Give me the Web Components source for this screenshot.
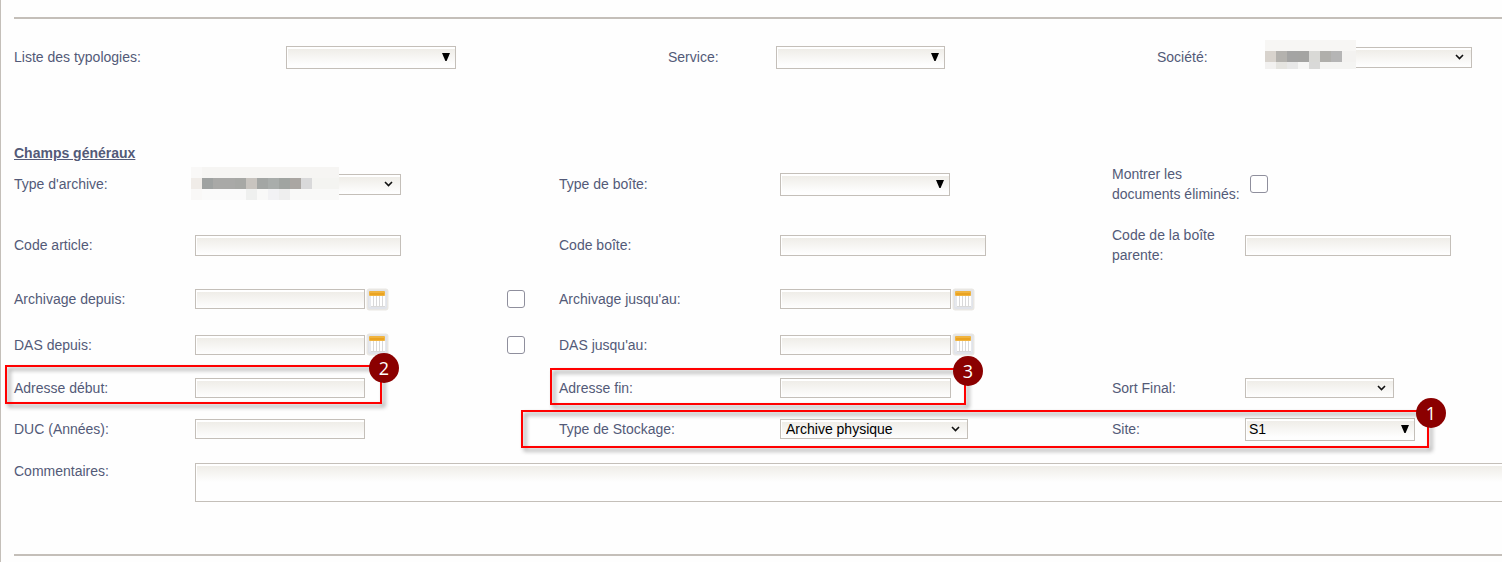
<!DOCTYPE html>
<html lang="fr">
<head>
<meta charset="utf-8">
<title>Recherche d'archives</title>
<style>
  html, body { margin: 0; background: #fefefe; }
  body { overflow-x: hidden; font: 14px/20px "Liberation Sans", Arial, sans-serif; color: #535a78; }
</style>
</head>
<body>
<search-panel>
  <form-row slot="filters" layout="filters">
    <form-field label="Liste des typologies:" type="combo" style="--c:1;--w:170px"></form-field>
    <form-field label="Service:" type="combo" style="--c:3;--w:169px"></form-field>
    <form-field label="Société:" type="select" style="--c:5;--w:207px"><pixel-mask kind="company"></pixel-mask></form-field>
  </form-row>

  <form-row style="--h:42px;--after:9px">
    <form-field label="Type d'archive:" type="select" style="--c:1;--w:206px"><pixel-mask kind="archive"></pixel-mask></form-field>
    <form-field label="Type de boîte:" type="combo" style="--c:4;--w:170px"></form-field>
    <form-field label="Montrer les documents éliminés:" type="check" style="--c:6;--indent:5px"></form-field>
  </form-row>
  <form-row style="--h:62px">
    <form-field label="Code article:" type="text" style="--c:1;--w:206px"></form-field>
    <form-field label="Code boîte:" type="text" style="--c:4;--w:206px"></form-field>
    <form-field label="Code de la boîte parente:" type="text" style="--c:6;--w:206px"></form-field>
  </form-row>
  <form-row style="--h:46px;--field:20px">
    <form-field label="Archivage depuis:" type="date" style="--c:1;--w:170px"></form-field>
    <form-field name="Activer la période d'archivage" type="check" style="--c:2"></form-field>
    <form-field label="Archivage jusqu'au:" type="date" style="--c:4;--w:171px"></form-field>
  </form-row>
  <form-row style="--h:45px;--field:20px">
    <form-field label="DAS depuis:" type="date" style="--c:1;--w:170px"></form-field>
    <form-field name="Activer la période DAS" type="check" style="--c:2"></form-field>
    <form-field label="DAS jusqu'au:" type="date" style="--c:4;--w:171px"></form-field>
  </form-row>
  <form-row style="--h:42px;--field:20px">
    <form-field label="Adresse début:" type="text" style="--c:1;--w:170px"></form-field>
    <form-field label="Adresse fin:" type="text" style="--c:4;--w:171px"></form-field>
    <form-field label="Sort Final:" type="select" style="--c:6;--w:149px"></form-field>
    <call-out style="grid-column:1/3;inset:-2px 125px 5px -9px">2</call-out>
    <call-out style="grid-column:4/6;inset:1px 146px 4px -9px">3</call-out>
  </form-row>
  <form-row style="--h:40px;--field:20px">
    <form-field label="DUC (Années):" type="text" style="--c:1;--w:170px"></form-field>
    <form-field label="Type de Stockage:" type="select" value="Archive physique" style="--c:4;--w:188px"></form-field>
    <form-field label="Site:" type="combo" value="S1" style="--c:6;--w:170px"></form-field>
    <call-out style="grid-column:4/8;inset:1px 73px 1px -38px">1</call-out>
  </form-row>
  <form-row layout="wide" style="--h:67px">
    <form-field label="Commentaires:" type="area" style="--c:1"></form-field>
  </form-row>
</search-panel>

<script>
class SearchPanel extends HTMLElement {
  constructor() {
    super();
    this.attachShadow({ mode: 'open' }).innerHTML = `
      <style>
        :host { display: block; box-sizing: border-box; min-height: 100vh; padding: 17px 0 6px 13px; border-left: 1px solid #c4bfb9; }
        hr { height: 2px; margin: 0; border: 0; background: #c4bfb9; }
        h2 { margin: 48px 0 0; font-size: 14px; line-height: 20px; text-decoration: underline; }
        .end { margin-top: 38px; }
      </style>
      <hr>
      <slot name="filters"></slot>
      <h2>Champs généraux</h2>
      <slot></slot>
      <hr class="end">`;
  }
}

class FormRow extends HTMLElement {
  constructor() {
    super();
    this.attachShadow({ mode: 'open' }).innerHTML = `
      <style>
        :host { display: grid; position: relative; align-items: center; min-height: var(--h, 76px); margin-bottom: var(--after, 0);
          grid-template-columns: minmax(0,181fr) minmax(0,312fr) minmax(0,52fr) minmax(0,221fr) minmax(0,332fr) minmax(0,133fr) minmax(0,257fr); }
        :host([layout="filters"]) { grid-template-columns: minmax(0,272fr) minmax(0,382fr) minmax(0,108fr) minmax(0,381fr) minmax(0,108fr) minmax(0,237fr); }
        :host([layout="wide"]) { grid-template-columns: minmax(0,181fr) minmax(0,1307fr); }
      </style>
      <slot></slot>`;
  }
}

const CHEVRON = '<svg class="arrow" width="9" height="6" viewBox="0 0 9 6" aria-hidden="true"><path d="M1 1 4.5 4.5 8 1" fill="none" stroke="#111" stroke-width="1.6"/></svg>';
const TRIANGLE = '<svg class="arrow" width="8" height="8" viewBox="0 0 8 8" aria-hidden="true"><path d="M0 0h8L4.6 8H3.4z" fill="#000"/></svg>';
const CALENDAR = `<svg width="23" height="23" viewBox="0 0 23 23" aria-hidden="true">
  <rect x=".5" y=".5" width="22" height="22" rx="3" fill="#e9e7e3"/>
  <rect x="2" y="2" width="19" height="19" rx="2" fill="#e0e3ea"/>
  <path d="M3 8h17v11H3z" fill="#e6e8ec"/>
  <path d="M5 8h2v10H5zM8 8h2v10H8zM11 8h2v10h-2zM14 8h2v10h-2zM17 8h2v10h-2z" fill="#fff"/>
  <path d="M7 8h1v10H7zM10 8h1v10h-1zM13 8h1v10h-1zM16 8h1v10h-1z" fill="#d9d9da"/>
  <path d="M5 18h14v1H5z" fill="#d9d9d9"/>
  <rect x="3" y="3" width="16" height="5" rx="1" fill="#f0b440"/>
  <path d="M4 5h14v2H4z" fill="#eaa322"/>
</svg>`;

class FormField extends HTMLElement {
  connectedCallback() {
    if (this.shadowRoot) return;
    const type = this.getAttribute('type');
    const label = this.getAttribute('label');
    const value = this.getAttribute('value') || '';
    const name = label ? '' : `aria-label="${this.getAttribute('name')}"`;
    const select = `<select id="c"><option>${value}</option></select>`;
    const control = {
      text: '<input id="c" type="text">',
      date: `<input id="c" type="text"><button type="button" aria-label="Ouvrir le calendrier">${CALENDAR}</button>`,
      check: `<input id="c" type="checkbox" ${name}>`,
      area: '<textarea id="c"></textarea>',
      select: select + CHEVRON,
      combo: select + TRIANGLE
    }[type];
    this.attachShadow({ mode: 'open' }).innerHTML = `
      <style>
        :host { display: contents; }
        label { grid-column: var(--c); grid-row: 1; }
        .control { grid-column: calc(var(--c) + 1); grid-row: 1; display: flex; align-items: center; position: relative; width: max-content; margin-left: var(--indent, 0); }
        input, select, textarea { box-sizing: border-box; margin: 0; font: inherit; color: #000; border: 1px solid #c4bfb9; border-radius: 0;
          background: #fff linear-gradient(#efede8, #fefefe 16px) 1px 2px / 100% 100% no-repeat; }
        input[type="text"] { width: var(--w); height: var(--field, 21px); padding: 0 4px; }
        select { appearance: none; width: var(--w); height: var(--field, 21px); padding: 0 20px 0 5px; line-height: 18px; }
        .combo select { height: 23px; padding-left: 3px; }
        .arrow { position: absolute; right: 8px; pointer-events: none; }
        .combo .arrow { right: 6px; }
        input[type="checkbox"] { appearance: none; width: 18px; height: 18px; border: 1px solid #8f8f9d; border-radius: 3px; background: #fff; }
        button { display: block; margin: 0 0 0 1px; padding: 0; border: 0; background: none; height: 23px; }
        .area { width: auto; align-self: start; margin-right: -4px; }
        textarea { width: 100%; height: 39px; resize: none; margin-top: 14px; }
        .area-label { align-self: start; margin-top: 12px; }
      </style>
      ${label ? `<label class="${type}-label" for="c">${label}</label>` : ''}
      <div class="control ${type}">${control}<slot></slot></div>`;
  }
}

/* Mosaic that hides a confidential value; each cell is 11px wide. */
const MASKS = {
  company: { w: 91, h: 29, x: 0, y: -7, rows: [
    ['#f7f6f4'],
    ['#d8d3cd', '#b4b2ae', '#a4a4a3', '#a4a4a2', '#d9d9d6', '#b0afab', '#b5b5b5', '#f3f2f0'],
    ['#f2f1f0', '#e5e4e0', '#e8e8e8', '#f6f6f5', '#d9d9d8', '#f4f4f2'] ] },
  archive: { w: 148, h: 33, x: -4, y: -7, rows: [
    ['#f9f8f7', '#f6f5f3'],
    ['#f0ece8', '#9fa2a1', '#a9a9a7', '#a9a9a7', '#a7a8a5', '#c8c4bf', '#a3a6a4', '#a9adab', '#a0a4a1', '#aaa6a2', '#d9d9da', '#f4f4f1'],
    ['#f9f8f7', '#fafafa', '#fafafa', '#fafafa', '#fafafa', '#eff0ef', '#f9f9f8', '#f2f2f4', '#eeeeee', '#f9f9f8'] ] }
};
class PixelMask extends HTMLElement {
  connectedCallback() {
    if (this.shadowRoot) return;
    const m = MASKS[this.getAttribute('kind')];
    const cells = m.rows.map((row, r) => row.map((fill, i) =>
      `<rect x="${i * 11}" y="${r * 11}" width="${i === row.length - 1 ? m.w - i * 11 : 11}" height="11" fill="${fill}"/>`).join('')).join('');
    this.attachShadow({ mode: 'open' }).innerHTML = `
      <style>:host { display: block; position: absolute; left: ${m.x}px; top: ${m.y}px; } svg { display: block; }</style>
      <svg width="${m.w}" height="${m.h}" shape-rendering="crispEdges" aria-hidden="true">${cells}</svg>`;
  }
}

class CallOut extends HTMLElement {
  constructor() {
    super();
    this.attachShadow({ mode: 'open' }).innerHTML = `
      <style>
        :host { display: block; position: absolute; z-index: 1; pointer-events: none; }
        .frame { box-sizing: border-box; height: 100%; border: 2px solid #f00; filter: drop-shadow(3px 3px 2px rgba(0,0,0,.45)); }
        .badge { position: absolute; right: -17px; top: -12px; width: 30px; height: 30px; border-radius: 50%; background: #8b0000; color: #fff;
          font: 18px/30px "Open Sans", sans-serif; text-align: center; }
      </style>
      <div class="frame"></div><span class="badge"><slot></slot></span>`;
  }
}

customElements.define('search-panel', SearchPanel);
customElements.define('form-row', FormRow);
customElements.define('form-field', FormField);
customElements.define('pixel-mask', PixelMask);
customElements.define('call-out', CallOut);
</script>
</body>
</html>
